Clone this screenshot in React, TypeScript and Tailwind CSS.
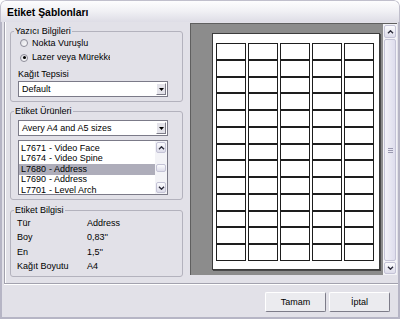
import React from "react";

function Radio({ checked, label }: { checked?: boolean; label: string }) {
  return (
    <div className="flex items-center gap-[4px] pl-[9px]">
      <div className="w-[8px] h-[8px] rounded-full border border-[#8d8c99] bg-gradient-to-br from-[#dcdce2] to-white flex items-center justify-center">
        {checked && <div className="w-[3px] h-[3px] rounded-full bg-black" />}
      </div>
      <span className="w-[78px] overflow-hidden whitespace-nowrap">{label}</span>
    </div>
  );
}

function DropArrow() {
  return (
    <div className="w-[10px] h-full border border-t-white border-l-white border-b-[#7c7b88] border-r-[#7c7b88] bg-[#e4e3ea] flex items-center justify-center">
      <svg width="5" height="3" viewBox="0 0 5 3">
        <path d="M0 0 H5 L2.5 3 Z" fill="#000" />
      </svg>
    </div>
  );
}

function Select({ text }: { text: string }) {
  return (
    <div className="ml-[7px] w-[150px] h-[16px] border border-[#7b7a88] bg-white flex items-stretch p-[1px]">
      <div className="flex-1 flex items-center pl-[2px]">{text}</div>
      <DropArrow />
    </div>
  );
}

function Chevron({ down }: { down?: boolean }) {
  return (
    <svg width="7" height="4" viewBox="0 0 7 4">
      <path
        d={down ? "M1 0.8 L3.5 3.2 L6 0.8" : "M1 3.2 L3.5 0.8 L6 3.2"}
        stroke="#2b2b3a"
        strokeWidth="1.4"
        fill="none"
      />
    </svg>
  );
}

function ScrollBtn({ down, h }: { down?: boolean; h: string }) {
  return (
    <div
      className={`${h} mx-[1px] rounded-[2px] border border-[#c4c3d6] bg-gradient-to-b from-[#fbfbfd] to-[#dddcea] flex items-center justify-center`}
    >
      <Chevron down={down} />
    </div>
  );
}

const items: [string, string][] = [
  ["L7671", "- Video Face"],
  ["L7674", "- Video Spine"],
  ["L7680", "- Address"],
  ["L7690", "- Address"],
  ["L7701", "- Level Arch"],
];

const info: [string, string][] = [
  ["Tür", "Address"],
  ["Boy", "0,83''"],
  ["En", "1,5''"],
  ["Kağıt Boyutu", "A4"],
];

export default function App() {
  const cells = Array.from({ length: 65 });
  return (
    <div className="w-[400px] h-[319px] flex flex-col rounded-t-[6px] overflow-hidden font-['Liberation_Sans',Arial,sans-serif] text-[9px] text-black leading-none">
      <div className="h-[22px] shrink-0 flex items-center pl-[6px] pt-[3px] bg-gradient-to-b from-[#fdfdfe] via-[#f0f0f4] to-[#dedde6] border-t border-x border-[#c0bfcc] rounded-t-[6px]">
        <span className="text-[10.4px] font-bold">Etiket Şablonları</span>
      </div>
      <div className="flex-1 flex flex-col bg-[#e2e1e8] border-x-2 border-b-2 border-[#b6b5c5]">
        <div className="ml-[2px] h-[262px] shrink-0 flex items-start border-l border-b border-[#a3a2ae] shadow-[0_1px_0_#fff,inset_1px_0_0_#fff] pl-[5px]">
          {/* left column */}
          <div className="w-[173px] pt-[4px] flex flex-col">
            <fieldset className="h-[76px] border border-[#b3b2bd] rounded-[3px]">
              <legend className="ml-[3px] px-[1px] leading-[10px]">Yazıcı Bilgileri</legend>
              <div className="h-[14px] flex items-center">
                <Radio label="Nokta Vuruşlu" />
              </div>
              <div className="h-[15px] flex items-center">
                <Radio checked label="Lazer veya Mürekkep Püskürtmeli" />
              </div>
              <div className="h-[16px] flex items-center pt-[2px] pl-[7px]">Kağıt Tepsisi</div>
              <Select text="Default" />
            </fieldset>
            <fieldset className="mt-[4px] h-[94px] border border-[#b3b2bd] rounded-[3px]">
              <legend className="ml-[3px] px-[1px] leading-[10px]">Etiket Ürünleri</legend>
              <div className="mt-[4px]">
                <Select text="Avery A4 and A5 sizes" />
              </div>
              <div className="mt-[4px] ml-[7px] w-[150px] h-[55px] border border-[#7b7a88] bg-white flex">
                <div className="flex-1 pt-[2px]">
                  {items.map(([c, n], i) => (
                    <div
                      key={c}
                      className={`h-[10.5px] flex items-center pl-[2px] ${i === 2 ? "bg-[#aeadba]" : ""}`}
                    >
                      <span className="w-[28px]">{c}</span>
                      <span>{n}</span>
                    </div>
                  ))}
                </div>
                <div className="w-[12px] flex flex-col bg-[#f3f3f7] py-[1px]">
                  <ScrollBtn h="h-[11px]" />
                  <div className="flex-1 pt-[11px]">
                    <div className="h-[8px] mx-[1px] rounded-[2px] border border-[#c4c3d6] bg-gradient-to-b from-[#fbfbfd] to-[#dddcea]" />
                  </div>
                  <ScrollBtn down h="h-[11px]" />
                </div>
              </div>
            </fieldset>
            <fieldset className="mt-[5px] h-[72px] border border-[#b3b2bd] rounded-[3px]">
              <legend className="ml-[3px] px-[1px] leading-[10px]">Etiket Bilgisi</legend>
              <div className="pt-[1px]">
                {info.map(([k, v]) => (
                  <div key={k} className="h-[14.5px] flex items-center">
                    <span className="w-[76px] pl-[6px]">{k}</span>
                    <span>{v}</span>
                  </div>
                ))}
              </div>
            </fieldset>
          </div>
          {/* preview */}
          <div className="ml-[7px] mt-[1px] mr-[1px] h-[252px] flex-1 flex border-t border-l border-[#5f5f5f] bg-[#8c8c8c]">
            <div className="flex-1 pl-[21px] pt-[9px] bg-[#8c8c8c]">
              <div className="w-[168px] h-[237px] bg-white border border-[#3c3c3c] shadow-[1px_1px_0_#4a4a4a] pl-[3px] pt-[9px]">
                <div className="w-[158px] h-[218px] grid grid-cols-5 grid-rows-[repeat(13,minmax(0,1fr))] gap-x-[2.5px]">
                  {cells.map((_, i) => (
                    <div key={i} className="border border-[#1e1e1e] bg-white" />
                  ))}
                </div>
              </div>
            </div>
            <div className="w-[14px] flex flex-col bg-[#f3f3f7] py-[1px]">
              <ScrollBtn h="h-[13px]" />
              <div className="flex-1 py-[1px]">
                <div className="h-full mx-[1px] rounded-[2px] border border-[#c4c3d6] bg-gradient-to-r from-[#f2f2f7] to-[#dedded] flex items-center justify-center">
                  <div className="flex flex-col gap-[1px]">
                    <div className="w-[5px] h-[1px] bg-[#9a99b0]" />
                    <div className="w-[5px] h-[1px] bg-[#9a99b0]" />
                    <div className="w-[5px] h-[1px] bg-[#9a99b0]" />
                  </div>
                </div>
              </div>
              <ScrollBtn down h="h-[12px]" />
            </div>
          </div>
        </div>
        <div className="flex justify-end gap-[3px] pr-[8px] mt-[8px]">
          <button className="w-[61px] h-[20px] border border-t-white border-l-white border-b-[#7d7c89] border-r-[#7d7c89] bg-[#ebebef] rounded-[2px] flex items-center justify-center">
            Tamam
          </button>
          <button className="w-[61px] h-[20px] border border-t-white border-l-white border-b-[#7d7c89] border-r-[#7d7c89] bg-[#ebebef] rounded-[2px] flex items-center justify-center">
            İptal
          </button>
        </div>
      </div>
    </div>
  );
}
